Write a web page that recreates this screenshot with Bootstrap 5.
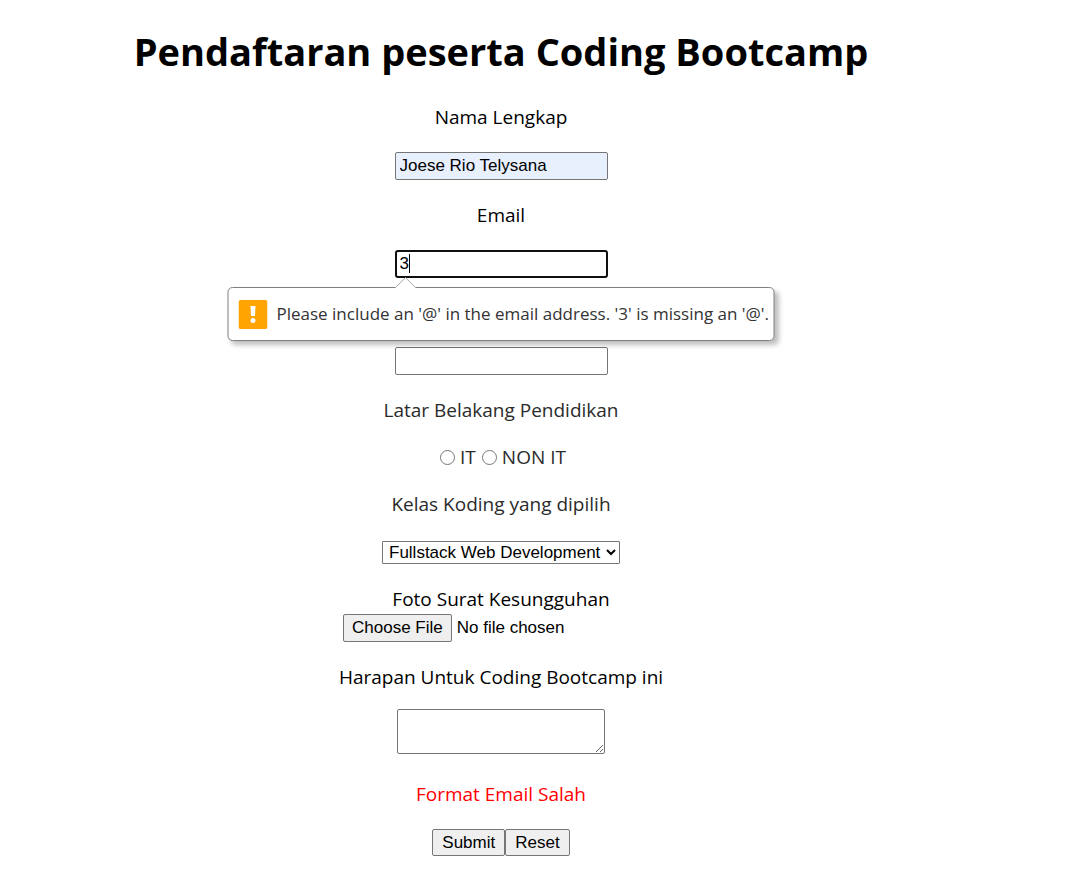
<!DOCTYPE html>
<html lang="id">
<head>
<meta charset="utf-8">
<meta name="viewport" content="width=device-width, initial-scale=1">
<title>Pendaftaran peserta Coding Bootcamp</title>
<link href="https://cdn.jsdelivr.net/npm/bootstrap@5.3.0/dist/css/bootstrap.min.css" rel="stylesheet">
<style>
  body { font-family: "Open Sans", sans-serif; font-size: 19px; line-height: 28px; color: #000; background: #fff; }
  .page { padding: 24px 69px 36px 0; }
  .page-title { font-size: 38px; font-weight: 700; line-height: 54px; margin-bottom: 25px; }
  .gap-field { gap: 21px; }
  .soft { color: #2b2b2b; }
  .control { font-family: "Liberation Sans", sans-serif; font-size: 17px; line-height: 20px; color: #000; }
  .box { width: 213px; height: 28px; padding: 1px 4px; border: 1px solid #767676; border-radius: 2px; background: #fff; outline: 0; }
  .box-filled { background: #e8f0fe; }
  .box-active { border: 2px solid #101010; border-radius: 3px; padding: 0 3px; }
  .caret { position: absolute; left: 14px; top: 4px; width: 1px; height: 19px; background: #000; }
  .bubble { position: absolute; top: 37px; left: 50%; transform: translateX(-50%); z-index: 2; height: 54px; padding: 0 4px 0 10px; gap: 9px; white-space: nowrap; color: #333; font-size: 17px; border: 1px solid #808080; border-radius: 5px; background: #fff; box-shadow: 4px 4px 5px rgba(0,0,0,.25); width: 547px; }
  .bubble-tip { position: absolute; top: -11px; left: 166px; }
  .phone-box { margin-top: 48px; }
  .group-title { font-size: 19px; line-height: 28px; }
  .choices { gap: 6px; line-height: 24px; padding-left: 4px; }
  .radio { width: 15px; height: 15px; margin: 0 5px 0 0; }
  .pick { width: 238px; height: 23px; margin-top: 2px; padding: 0 2px; border: 1px solid #767676; border-radius: 1px; background: #fff; }
  .file { width: 316px; height: 28px; margin-top: 1px; }
  .file::file-selector-button { height: 28px; padding: 1px 8px; margin-right: 5px; border: 1px solid #767676; border-radius: 2px; background: #efefef; color: #000; }
  .area { width: 208px; height: 45px; margin: 18px 0 5px; padding: 2px; border: 1px solid #767676; border-radius: 2px; resize: both; }
  .error-text { color: #f00; }
  .push { height: 27px; padding: 1px 9px; border: 1px solid #767676; border-radius: 2px; background: #efefef; }
</style>
</head>
<body>
<main class="page text-center">
  <h1 class="page-title">Pendaftaran peserta Coding Bootcamp</h1>
  <form class="d-flex flex-column align-items-center gap-field" novalidate>
    <div class="d-flex flex-column align-items-center gap-field">
      <label for="nama">Nama Lengkap</label>
      <input class="control box box-filled" id="nama" type="text" value="Joese Rio Telysana">
    </div>
    <div class="d-flex flex-column align-items-center gap-field">
      <label for="email">Email</label>
      <div class="position-relative d-flex">
        <input class="control box box-active" id="email" type="email" value="3">
        <span class="caret"></span>
        <div class="bubble d-flex align-items-center" role="alert">
          <svg class="bubble-tip" width="22" height="12" viewBox="0 0 22 12"><path d="M0 12 L1 10.500 L11 .5 L21 10.500 L22 12Z" fill="#fff"/><path d="M.5 11 L11 .7 L21.500 11" fill="none" stroke="#aaa"/></svg>
          <svg class="flex-shrink-0" width="29" height="29" viewBox="0 0 29 29"><rect width="29" height="29" rx="2" fill="#ffa400"/><path d="M12 6h5l-.5 10h-4z" fill="#fff"/><circle cx="14.500" cy="20.500" r="2.500" fill="#fff"/></svg>
          <span>Please include an '@' in the email address. '3' is missing an '@'.</span>
        </div>
      </div>
    </div>
    <input class="control box phone-box" type="tel" aria-label="Nomor telepon">
    <div class="d-flex flex-column align-items-center gap-field soft" role="radiogroup" aria-labelledby="latar-title">
      <div class="group-title" id="latar-title">Latar Belakang Pendidikan</div>
      <div class="d-flex choices">
        <label class="d-flex align-items-center"><input class="radio" type="radio" name="latar">IT</label>
        <label class="d-flex align-items-center"><input class="radio" type="radio" name="latar">NON IT</label>
      </div>
    </div>
    <div class="d-flex flex-column align-items-center gap-field soft">
      <label for="kelas">Kelas Koding yang dipilih</label>
      <select class="control pick" id="kelas"><option>Fullstack Web Development</option></select>
    </div>
    <div class="d-flex flex-column align-items-center">
      <label for="foto">Foto Surat Kesungguhan</label>
      <input class="control file" id="foto" type="file">
    </div>
    <div class="d-flex flex-column align-items-center">
      <label for="harapan">Harapan Untuk Coding Bootcamp ini</label>
      <textarea class="control area" id="harapan"></textarea>
    </div>
    <div class="error-text">Format Email Salah</div>
    <div class="d-flex">
      <button class="control push" type="submit">Submit</button>
      <button class="control push" type="reset">Reset</button>
    </div>
  </form>
</main>
<script src="https://cdn.jsdelivr.net/npm/bootstrap@5.3.0/dist/js/bootstrap.bundle.min.js"></script>
</body>
</html>
